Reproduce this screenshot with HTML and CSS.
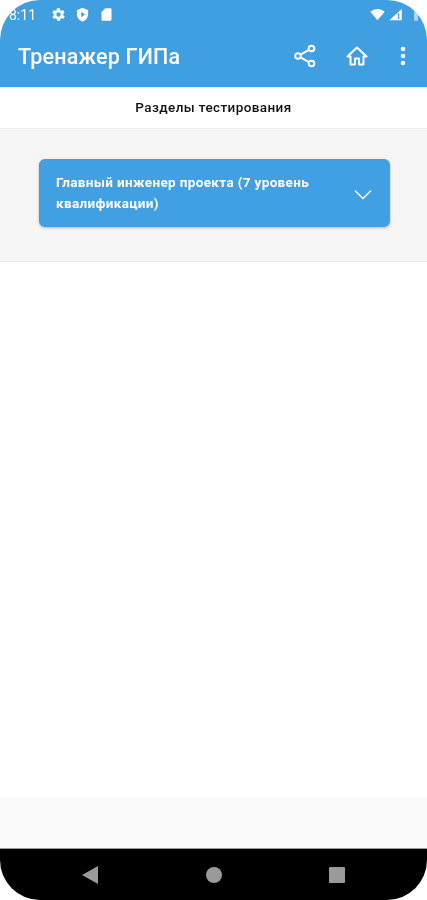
FILE: index.html
```html
<!DOCTYPE html>
<html lang="ru">
<head>
  <meta charset="UTF-8" />
  <meta name="viewport" content="width=device-width, initial-scale=1.0"/>
  <title>Тренажер ГИПа</title>
  <link rel="stylesheet" href="styles.css">
</head>
<body>
  <div class="phone">
    <header class="appbar">
      <div class="statusbar">
        <div class="status-left">
          <span class="clock">8:11</span>
          <svg class="status-icon" viewBox="0 0 24 24"><path fill-rule="evenodd" d="M19.4 13c.1-.3.1-.7.1-1s0-.7-.1-1l2.100-1.600c.2-.2.2-.4.1-.6l-2-3.500c-.1-.2-.4-.3-.6-.2l-2.500 1c-.5-.4-1.100-.7-1.700-1l-.4-2.700c0-.2-.2-.4-.5-.4h-4c-.3 0-.5.2-.5.4l-.4 2.700c-.6.3-1.200.6-1.700 1l-2.500-1c-.2-.1-.5 0-.6.2l-2 3.500c-.1.2-.1.4.1.6L4.600 11c-.1.3-.1.7-.1 1s0 .7.1 1l-2.100 1.600c-.2.2-.2.4-.1.6l2 3.500c.1.2.4.3.6.2l2.500-1c.5.4 1.100.7 1.700 1l.4 2.700c0 .2.2.4.5.4h4c.3 0 .5-.2.5-.4l.4-2.700c.6-.3 1.200-.6 1.700-1l2.500 1c.2.1.5 0 .6-.2l2-3.500c.1-.2.1-.4-.1-.6zM12 15.500a3.500 3.500 0 1 1 0-7 3.500 3.500 0 0 1 0 7z"/></svg>
          <svg class="status-icon" viewBox="0 0 24 24"><path fill-rule="evenodd" d="M12 1 3 5v6c0 5.600 3.800 10.700 9 12 5.200-1.300 9-6.400 9-12V5zm-2 6.500 6 4.500-6 4.500z"/></svg>
          <svg class="status-icon" viewBox="0 0 24 24"><path d="M18 2h-8L4 8v12c0 1.100.9 2 2 2h12c1.100 0 2-.9 2-2V4c0-1.100-.9-2-2-2z"/></svg>
        </div>
        <div class="status-right">
          <svg class="status-icon wifi" viewBox="0 0 24 24"><path d="M12 21 .5 7.500C3.500 4.700 7.500 3 12 3s8.500 1.700 11.500 4.500z"/></svg>
          <svg class="status-icon" viewBox="0 0 24 24"><path d="M22 3v18H2zM17 10l-1 0v9h2v-9z" fill-rule="evenodd"/></svg>
          <svg class="status-icon battery" viewBox="0 0 12 24"><path d="M3 4h6v18H3z"/></svg>
        </div>
      </div>
      <div class="toolbar">
        <h1 class="title">Тренажер ГИПа</h1>
        <div class="actions">
          <svg class="action share" viewBox="0 0 24 24"><g fill="none" stroke="#fff" stroke-width="2"><circle cx="18.500" cy="4.500" r="2.800"/><circle cx="5" cy="12" r="2.800"/><circle cx="18.500" cy="19.500" r="2.800"/><path d="M7.500 10.600 16 5.900M7.500 13.400 16 18.100"/></g></svg>
          <svg class="action home" viewBox="0 0 24 24"><path fill="none" stroke="#fff" stroke-width="2" stroke-linejoin="round" d="M12 3.500 2.500 12.500H5.500V20.500H10V14.500H14V20.500H18.500V12.500H21.500Z"/></svg>
          <svg class="action more" viewBox="0 0 6 24"><circle cx="3" cy="5" r="2.300"/><circle cx="3" cy="12" r="2.300"/><circle cx="3" cy="19" r="2.300"/></svg>
        </div>
      </div>
    </header>

    <div class="subtitle">Разделы тестирования</div>

    <section class="sections">
      <div class="accordion">
        <span class="accordion-text">Главный инженер проекта (7 уровень квалификации)</span>
        <svg class="chevron" viewBox="0 0 20 12"><path fill="none" stroke="#fff" stroke-width="1.500" d="M1 1.500 10 10.500 19 1.500"/></svg>
      </div>
    </section>

    <main class="content"></main>
    <div class="bottom-strip"></div>

    <nav class="navbar">
      <svg class="nav-icon" viewBox="0 0 18 18"><path d="M17 0V18L1 9z"/></svg>
      <svg class="nav-icon" viewBox="0 0 18 18"><circle cx="9" cy="9" r="8"/></svg>
      <svg class="nav-icon" viewBox="0 0 18 18"><rect x="1" y="1" width="16" height="16" rx="1"/></svg>
    </nav>
  </div>
</body>
</html>
```

FILE: styles.css
```css
html, body {
  margin: 0;
  background: #fff;
}
body {
  font-family: Roboto, "Liberation Sans", sans-serif;
}
.phone {
  display: flex;
  flex-direction: column;
  height: 900px;
  overflow: hidden;
  border-radius: 40px;
  background: #fff;
  filter: blur(0.6px);
}
.appbar {
  height: 87px;
  background: #3f9fe1;
  color: #fff;
  box-sizing: border-box;
  padding-top: 6px;
}
.statusbar {
  display: flex;
  justify-content: space-between;
  align-items: center;
  height: 17px;
  padding: 0 7px 0 9px;
}
.status-left, .status-right {
  display: flex;
  align-items: center;
  gap: 9px;
}
.status-right {
  gap: 2px;
}
.clock {
  font-size: 14px;
  margin-right: 6px;
}
.status-icon {
  width: 15px;
  height: 15px;
  fill: #fff;
}
.wifi {
  width: 17px;
}
.battery {
  width: 8px;
  margin-left: 7px;
  opacity: 0.6;
}
.toolbar {
  display: flex;
  justify-content: space-between;
  align-items: center;
  height: 66px;
  padding: 0 21px 0 18px;
}
.title {
  margin: 0;
  font-size: 21.5px;
  font-weight: 500;
  letter-spacing: 0.2px;
}
.actions {
  display: flex;
  align-items: center;
}
.action {
  fill: #fff;
  height: 24px;
}
.share {
  width: 24px;
  margin-right: 28px;
}
.home {
  width: 24px;
  margin-right: 31px;
}
.more {
  width: 6px;
}
.subtitle {
  height: 41px;
  line-height: 39px;
  text-align: center;
  font-size: 13.5px;
  font-weight: 500;
  letter-spacing: 0.4px;
  color: #111;
  background: #fff;
  border-top: 1px solid #e4f0fa;
  box-sizing: border-box;
}
.sections {
  padding: 30px 37px 34px 39px;
  background: #f6f6f6;
  border-top: 1px solid #ececec;
  border-bottom: 1px solid #ececec;
}
.accordion {
  display: flex;
  justify-content: space-between;
  align-items: center;
  height: 68px;
  box-sizing: border-box;
  padding: 0 18px 0 17px;
  background: #41a0e2;
  border-radius: 6px;
  box-shadow: 0 1px 3px rgba(0, 0, 0, 0.25);
  color: #fff;
}
.accordion-text {
  width: 275px;
  font-size: 13.5px;
  font-weight: 700;
  line-height: 21px;
  letter-spacing: 0.35px;
}
.chevron {
  width: 18px;
  height: 11px;
  margin-top: 2px;
}
.content {
  flex: 1;
}
.bottom-strip {
  height: 50px;
  background: #fafafa;
}
.navbar {
  display: flex;
  justify-content: space-between;
  align-items: center;
  height: 52px;
  padding: 0 81px;
  background: #000;
  border-top: 1px solid #999;
  box-sizing: border-box;
}
.nav-icon {
  width: 18px;
  height: 18px;
  fill: #9a9a9a;
}
```
